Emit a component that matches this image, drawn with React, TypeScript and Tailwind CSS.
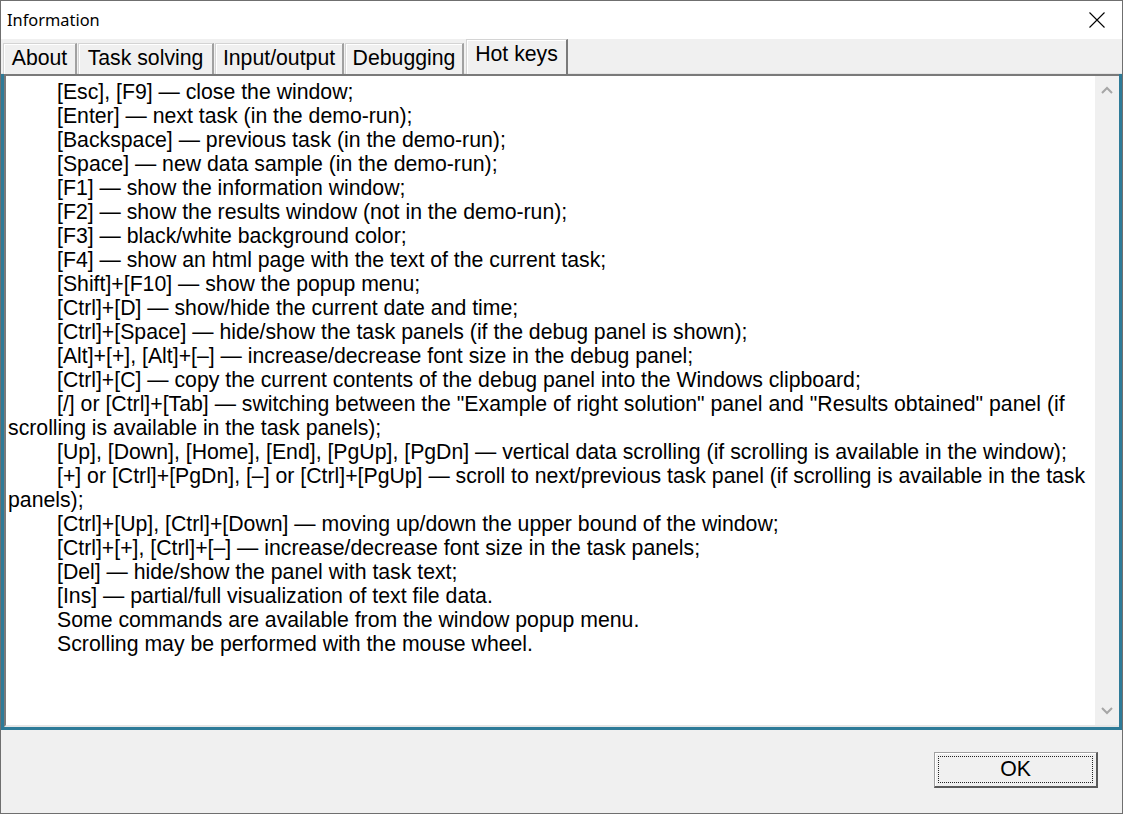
const lines: { text: string; indent: boolean }[] = [
  { text: '[Esc], [F9] — close the window;', indent: true },
  { text: '[Enter] — next task (in the demo-run);', indent: true },
  { text: '[Backspace] — previous task (in the demo-run);', indent: true },
  { text: '[Space] — new data sample (in the demo-run);', indent: true },
  { text: '[F1] — show the information window;', indent: true },
  { text: '[F2] — show the results window (not in the demo-run);', indent: true },
  { text: '[F3] — black/white background color;', indent: true },
  { text: '[F4] — show an html page with the text of the current task;', indent: true },
  { text: '[Shift]+[F10] — show the popup menu;', indent: true },
  { text: '[Ctrl]+[D] — show/hide the current date and time;', indent: true },
  { text: '[Ctrl]+[Space] — hide/show the task panels (if the debug panel is shown);', indent: true },
  { text: '[Alt]+[+], [Alt]+[–] — increase/decrease font size in the debug panel;', indent: true },
  { text: '[Ctrl]+[C] — copy the current contents of the debug panel into the Windows clipboard;', indent: true },
  { text: '[/] or [Ctrl]+[Tab] — switching between the "Example of right solution" panel and "Results obtained" panel (if', indent: true },
  { text: 'scrolling is available in the task panels);', indent: false },
  { text: '[Up], [Down], [Home], [End], [PgUp], [PgDn] — vertical data scrolling (if scrolling is available in the window);', indent: true },
  { text: '[+] or [Ctrl]+[PgDn], [–] or [Ctrl]+[PgUp] — scroll to next/previous task panel (if scrolling is available in the task', indent: true },
  { text: 'panels);', indent: false },
  { text: '[Ctrl]+[Up], [Ctrl]+[Down] — moving up/down the upper bound of the window;', indent: true },
  { text: '[Ctrl]+[+], [Ctrl]+[–] — increase/decrease font size in the task panels;', indent: true },
  { text: '[Del] — hide/show the panel with task text;', indent: true },
  { text: '[Ins] — partial/full visualization of text file data.', indent: true },
  { text: 'Some commands are available from the window popup menu.', indent: true },
  { text: 'Scrolling may be performed with the mouse wheel.', indent: true },
];

const tabs = [
  { label: 'About', w: 'w-[74px]' },
  { label: 'Task solving', w: 'w-[136px]' },
  { label: 'Input/output', w: 'w-[129px]' },
  { label: 'Debugging', w: 'w-[119px]' },
];

export default function App() {
  return (
    <div className="w-[1123px] h-[814px] flex flex-col bg-[#f0f0f0] border border-[#6f6f6f] overflow-hidden font-['Liberation_Sans',Arial,sans-serif] text-black">
      {/* title bar */}
      <div className="h-[38px] shrink-0 bg-white flex items-center justify-between pl-[6px] pr-[16px]">
        <span className="text-[16.4px] font-['Noto_Sans',sans-serif] text-black">Information</span>
        <svg width="16" height="16" viewBox="0 0 16 16" className="mr-[1px]">
          <path d="M0.5 0.5 L15.5 15.5 M15.5 0.5 L0.5 15.5" stroke="#000" strokeWidth="1.1" fill="none" />
        </svg>
      </div>

      {/* tabs */}
      <div className="h-[35px] shrink-0 flex items-end gap-[1px] pl-[2px] border-b border-b-[#e3e3e3]">
        {tabs.map((t) => (
          <div
            key={t.label}
            className={`${t.w} h-[31px] -mb-px flex items-center justify-center text-[21.25px] leading-none bg-[#f0f0f0] border-t border-l border-[#d4d4d4] border-r-2 border-r-[#a0a0a0] shadow-[inset_1px_1px_0_#ffffff]`}
          >
            <span className="-mt-[1px]">{t.label}</span>
          </div>
        ))}
        <div className="ml-[1px] w-[102px] h-[35px] -mb-px flex items-start justify-center pt-[4px] text-[21.25px] leading-none bg-[#f0f0f0] border-t border-l border-[#d4d4d4] border-r-2 border-r-[#7a7a7a] shadow-[inset_1px_1px_0_#ffffff]">
          Hot keys
        </div>
      </div>

      {/* memo */}
      <div className="flex-1 flex border-x-[3px] border-b-[3px] border-[#2e7b98]">
        <div className="flex-1 flex border-t-2 border-l-2 border-[#7a7a7a] border-b-2 border-b-[#e6e6e6] border-r-0 bg-white">
          <div className="flex-1 pt-[4px] pl-[2px] text-[21.25px] leading-[24px] overflow-hidden">
            {lines.map((l, i) => (
              <div key={i} className={`whitespace-nowrap ${l.indent ? 'pl-[49px]' : ''}`}>
                {l.text}
              </div>
            ))}
          </div>
          <div className="w-[24px] bg-[#f0f0f0] flex flex-col items-center justify-between py-[10px]">
            <svg width="12" height="8" viewBox="0 0 12 8">
              <path d="M1 7 L6 2 L11 7" stroke="#a6a6a6" strokeWidth="2" fill="none" />
            </svg>
            <svg width="12" height="8" viewBox="0 0 12 8">
              <path d="M1 1 L6 6 L11 1" stroke="#a6a6a6" strokeWidth="2" fill="none" />
            </svg>
          </div>
        </div>
      </div>

      {/* bottom */}
      <div className="h-[83px] shrink-0 flex items-start justify-end pr-[24px] pt-[22px]">
        <button className="w-[164px] h-[36px] p-[3px] border border-[#a0a0a0] border-r-2 border-b-2 border-r-[#5a5a5a] border-b-[#5a5a5a] bg-[#f0f0f0] shadow-[inset_1px_1px_0_#ffffff]">
          <div className="w-full h-full border border-dotted border-[#222] flex items-center justify-center text-[21.25px] leading-none">
            OK
          </div>
        </button>
      </div>
    </div>
  );
}
